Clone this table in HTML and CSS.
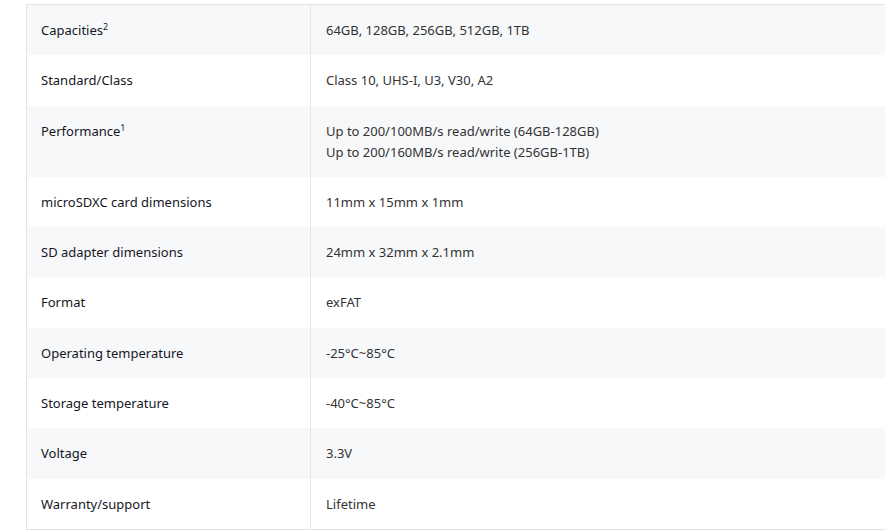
FILE: index.html
```html
<!DOCTYPE html>
<html>
<head>
<meta charset="utf-8">
<link rel="stylesheet" href="styles.css">
</head>
<body>
<table class="specs">
  <tbody>
    <tr><th>Capacities<sup>2</sup></th><td>64GB, 128GB, 256GB, 512GB, 1TB</td></tr>
    <tr><th>Standard/Class</th><td>Class 10, UHS-I, U3, V30, A2</td></tr>
    <tr><th>Performance<sup>1</sup></th><td>Up to 200/100MB/s read/write (64GB-128GB)<br>Up to 200/160MB/s read/write (256GB-1TB)</td></tr>
    <tr><th>microSDXC card dimensions</th><td>11mm x 15mm x 1mm</td></tr>
    <tr><th>SD adapter dimensions</th><td>24mm x 32mm x 2.1mm</td></tr>
    <tr><th>Format</th><td>exFAT</td></tr>
    <tr><th>Operating temperature</th><td>-25°C~85°C</td></tr>
    <tr><th>Storage temperature</th><td>-40°C~85°C</td></tr>
    <tr><th>Voltage</th><td>3.3V</td></tr>
    <tr><th>Warranty/support</th><td>Lifetime</td></tr>
  </tbody>
</table>
</body>
</html>
```
FILE: styles.css
```css
html, body {
  margin: 0;
  padding: 0;
  background: #fff;
}
body {
  padding: 4px 0 0 26px;
  overflow: hidden;
  font-family: "Noto Sans", "Open Sans", sans-serif;
  font-size: 13px;
}
.specs {
  border-collapse: collapse;
  width: 1000px;
  border: 1px solid #e2e3e5;
}
.specs tr:nth-child(odd) {
  background: #f7f8fa;
}
.specs th, .specs td {
  text-align: left;
  vertical-align: top;
  font-weight: normal;
  line-height: 21px;
  padding: 15px 14px 14.3px 14px;
}
.specs th {
  width: 255px;
  color: #16161e;
  border-right: 1px solid #e6e7e9;
}
.specs td {
  color: #333;
  padding-left: 15px;
}
.specs sup {
  font-size: 9px;
  line-height: 0;
  vertical-align: 5px;
}
```
